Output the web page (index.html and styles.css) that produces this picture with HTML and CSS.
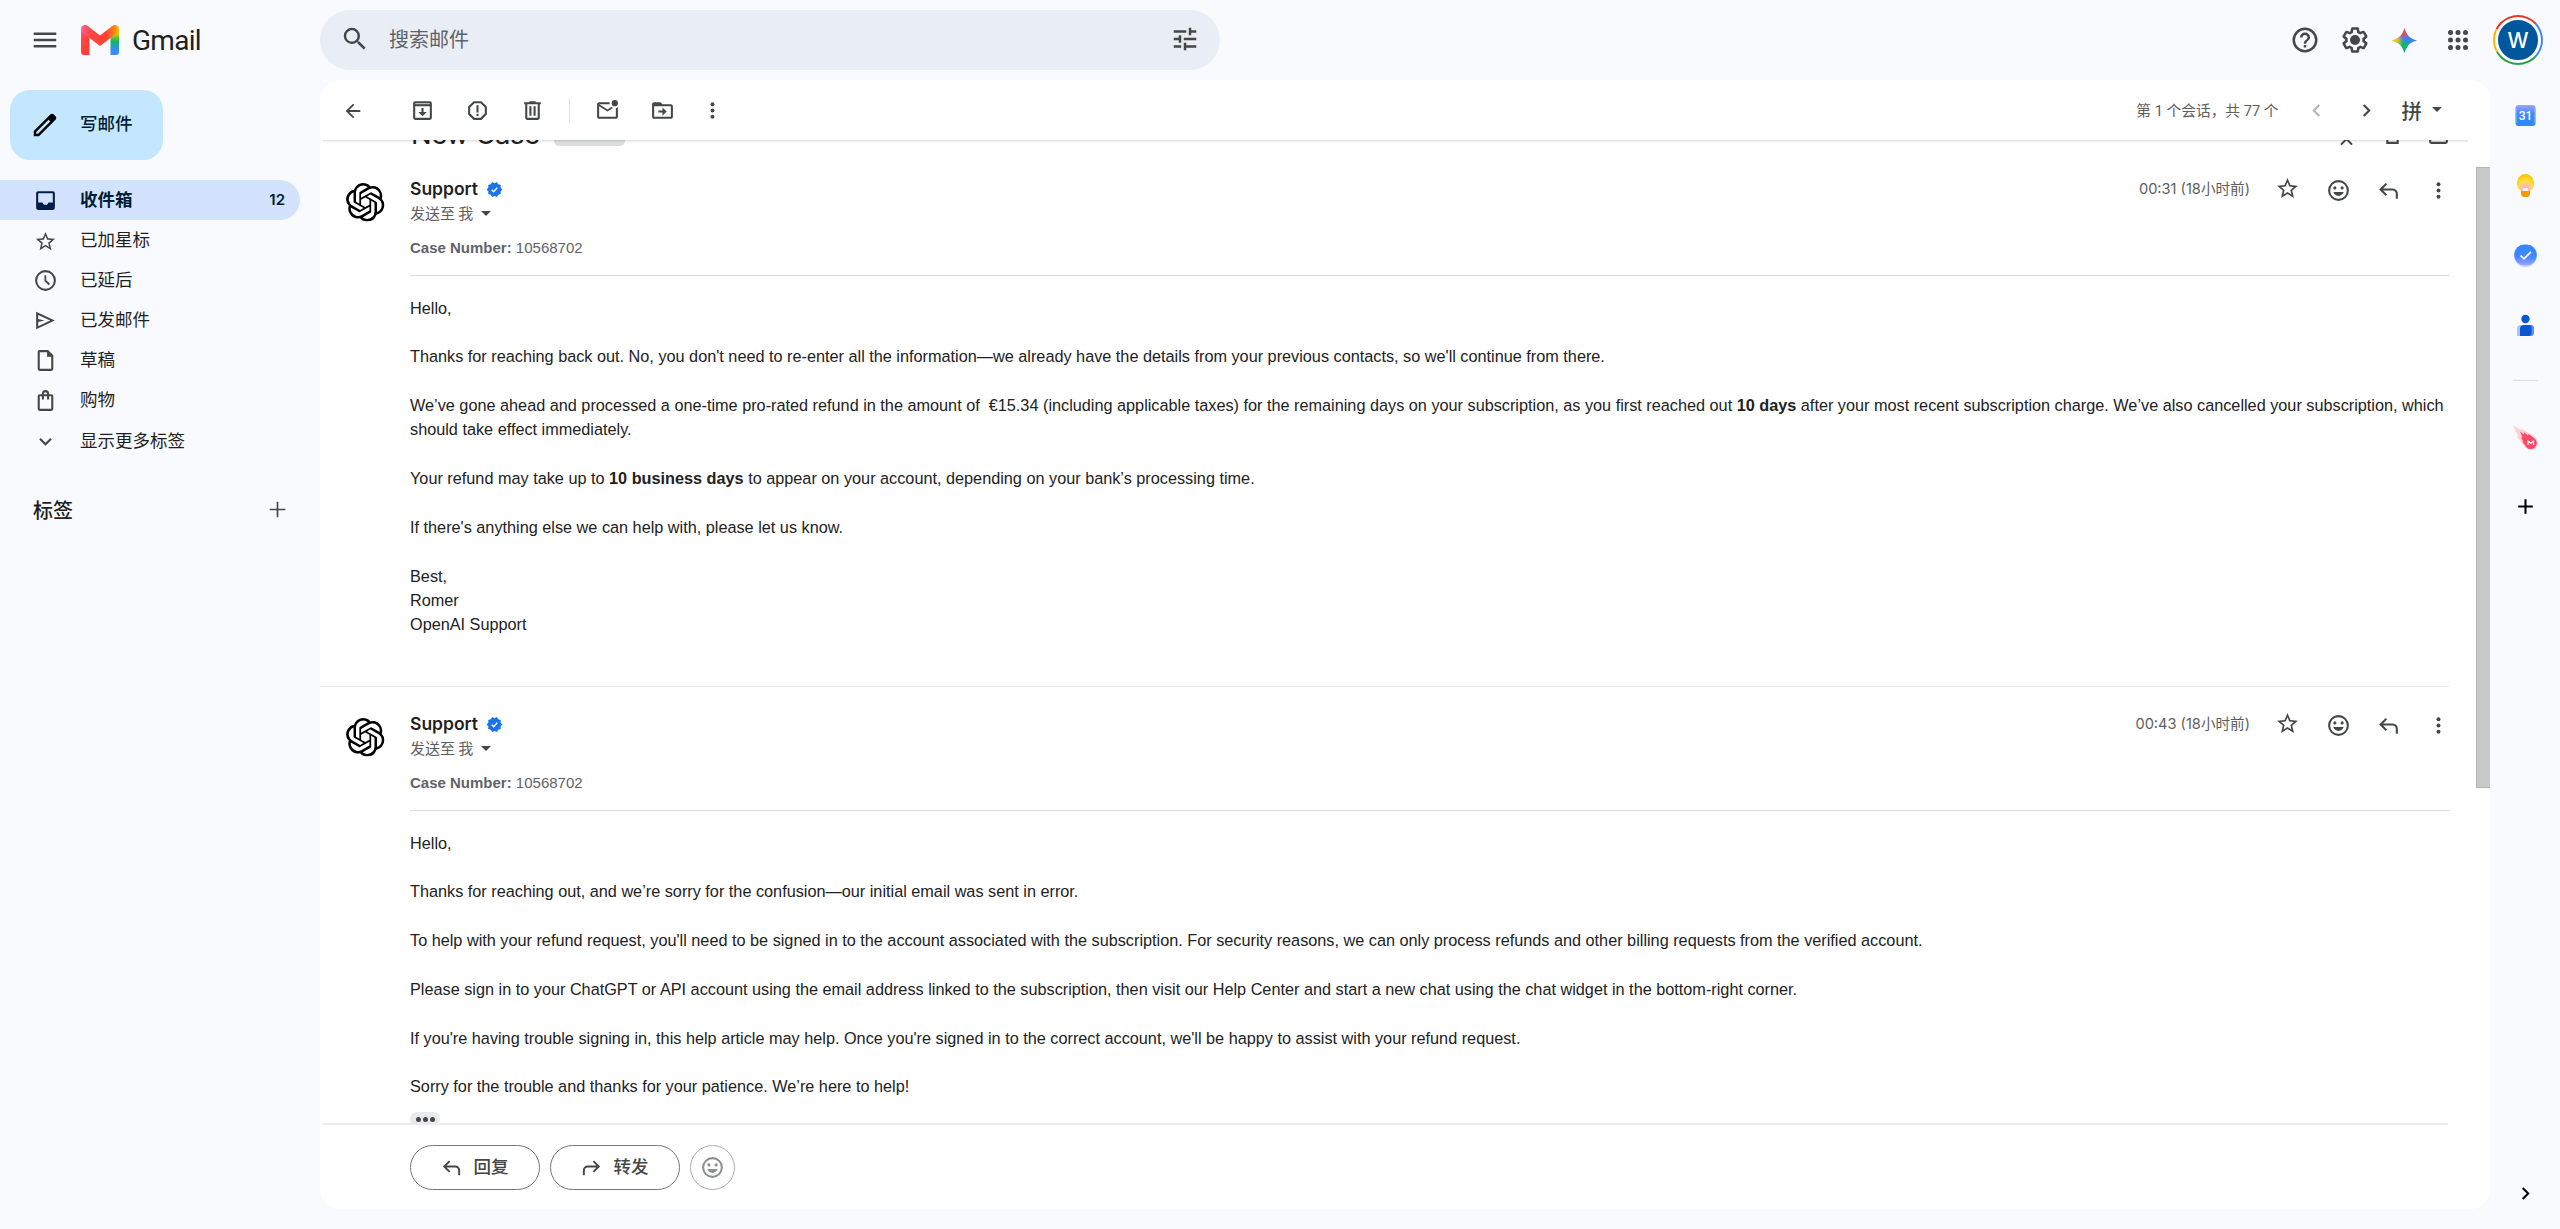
FILE: index.html
```html
<!DOCTYPE html>
<html lang="zh-CN">
<head>
<meta charset="utf-8">
<title>Gmail</title>
<link rel="stylesheet" href="styles.css">
</head>
<body>
<svg class="sprite" aria-hidden="true">
  <defs>
    <linearGradient id="g-left" x1="0" y1="0" x2="0.5" y2="1"><stop offset="0" stop-color="#ff63a0"/><stop offset=".4" stop-color="#ff4641"/><stop offset="1" stop-color="#ff3f35"/></linearGradient>
    <linearGradient id="g-right" x1="0" y1="0" x2="0" y2="1"><stop offset="0" stop-color="#ffc400"/><stop offset=".2" stop-color="#d8c500"/><stop offset=".48" stop-color="#12b95c"/><stop offset=".78" stop-color="#2f8bff"/><stop offset="1" stop-color="#3d88ff"/></linearGradient>
    <linearGradient id="g-mid" x1="0" y1="0" x2="1" y2="0"><stop offset="0" stop-color="#ff63a0"/><stop offset=".25" stop-color="#ff4641"/><stop offset=".65" stop-color="#ff3f35"/><stop offset=".85" stop-color="#ff7a1e"/><stop offset="1" stop-color="#ffc400"/></linearGradient>
    <linearGradient id="g-cal" x1="0" y1="0" x2="0" y2="1"><stop offset="0" stop-color="#a3a1ff"/><stop offset=".4" stop-color="#3b8bff"/><stop offset="1" stop-color="#3186ff"/></linearGradient>
    <linearGradient id="g-task" x1="0" y1="0" x2="0" y2="1"><stop offset="0" stop-color="#3186ff"/><stop offset=".6" stop-color="#4488ff"/><stop offset="1" stop-color="#a9a0ff"/></linearGradient>
    <radialGradient id="g-keep" cx=".5" cy=".85" r=".85"><stop offset="0" stop-color="#ffb0c8"/><stop offset=".3" stop-color="#ffc2a8"/><stop offset=".5" stop-color="#ffe03a"/><stop offset="1" stop-color="#fdc000"/></radialGradient>
    <radialGradient id="s-red" gradientUnits="userSpaceOnUse" cx="11" cy="1" r="10"><stop offset="0" stop-color="#ff4641"/><stop offset=".45" stop-color="#ff4641" stop-opacity=".9"/><stop offset="1" stop-color="#ff4641" stop-opacity="0"/></radialGradient>
    <radialGradient id="s-yel" gradientUnits="userSpaceOnUse" cx="1" cy="12" r="10"><stop offset="0" stop-color="#ffcc00"/><stop offset=".4" stop-color="#f6c311"/><stop offset="1" stop-color="#ffcc00" stop-opacity="0"/></radialGradient>
    <radialGradient id="s-grn" gradientUnits="userSpaceOnUse" cx="9" cy="21" r="11"><stop offset="0" stop-color="#0ebc5f"/><stop offset=".5" stop-color="#0ebc5f"/><stop offset="1" stop-color="#0ebc5f" stop-opacity="0"/></radialGradient>
    <path id="spark-shape" d="M12 0c1.600 6.600 5.400 10.400 12 12-6.600 1.600-10.400 5.400-12 12-1.600-6.600-5.400-10.400-12-12C6.600 10.400 10.400 6.600 12 0z"/>
  </defs>
  <symbol id="i-menu" viewBox="0 0 24 24"><path d="M3 18h18v-2H3v2zm0-5h18v-2H3v2zm0-7v2h18V6H3z"/></symbol>
  <symbol id="i-search" viewBox="0 0 24 24"><path d="M15.5 14h-.79l-.28-.27A6.47 6.47 0 0 0 16 9.5 6.5 6.5 0 1 0 9.5 16c1.61 0 3.09-.59 4.23-1.57l.27.28v.79l5 4.99L20.49 19l-4.99-5zm-6 0C7.01 14 5 11.99 5 9.5S7.01 5 9.5 5 14 7.01 14 9.5 11.99 14 9.5 14z"/></symbol>
  <symbol id="i-tune" viewBox="0 0 24 24"><path d="M3 17v2h6v-2H3zM3 5v2h10V5H3zm10 16v-2h8v-2h-8v-2h-2v6h2zM7 9v2H3v2h4v2h2V9H7zm14 4v-2H11v2h10zm-6-4h2V7h4V5h-4V3h-2v6z"/></symbol>
  <symbol id="i-help" viewBox="0 0 24 24"><path d="M11 18h2v-2h-2v2zm1-16a10 10 0 1 0 0 20 10 10 0 0 0 0-20zm0 18a8 8 0 1 1 0-16 8 8 0 0 1 0 16zm0-14a4 4 0 0 0-4 4h2a2 2 0 1 1 4 0c0 2-3 1.75-3 5h2c0-2.25 3-2.5 3-5a4 4 0 0 0-4-4z"/></symbol>
  <symbol id="i-gear" viewBox="0 0 24 24"><path d="M13.85 22.25h-3.7c-.74 0-1.36-.54-1.45-1.27l-.27-1.89c-.27-.14-.53-.29-.79-.46l-1.8.72c-.7.26-1.47-.03-1.81-.65L2.2 15.53c-.35-.66-.2-1.44.36-1.88l1.53-1.19c-.01-.15-.02-.3-.02-.46 0-.15.01-.31.02-.46l-1.52-1.19c-.59-.45-.74-1.26-.37-1.88l1.85-3.19c.34-.62 1.11-.9 1.79-.63l1.81.73c.26-.17.52-.32.78-.46l.27-1.91c.09-.7.71-1.25 1.44-1.25h3.7c.74 0 1.36.54 1.45 1.27l.27 1.89c.27.14.53.29.79.46l1.8-.72c.71-.26 1.48.03 1.82.65l1.84 3.18c.36.66.2 1.44-.36 1.88l-1.52 1.19c.01.15.02.3.02.46s-.01.31-.02.46l1.52 1.19c.56.45.72 1.23.37 1.86l-1.86 3.22c-.34.62-1.11.9-1.8.63l-1.8-.72c-.26.17-.52.32-.78.46l-.27 1.91c-.1.68-.72 1.22-1.46 1.22zm-3.23-2h2.76l.37-2.55.53-.22c.44-.18.88-.44 1.34-.78l.45-.34 2.38.96 1.38-2.4-2.03-1.58.07-.56c.03-.26.06-.51.06-.78s-.03-.53-.06-.78l-.07-.56 2.03-1.58-1.39-2.4-2.39.96-.45-.35c-.42-.32-.87-.58-1.33-.77l-.52-.22-.37-2.55h-2.76l-.37 2.55-.53.21c-.44.19-.88.44-1.34.79l-.45.33-2.38-.95-1.39 2.39 2.03 1.58-.07.56a7 7 0 0 0-.06.79c0 .26.02.53.06.78l.07.56-2.03 1.58 1.38 2.4 2.39-.96.45.35c.43.33.86.58 1.33.77l.53.22.38 2.55z"/><circle cx="12" cy="12" r="4"/></symbol>
  <symbol id="i-spark" viewBox="0 0 24 24"><use href="#spark-shape" fill="#3186ff"/><use href="#spark-shape" fill="url(#s-grn)"/><use href="#spark-shape" fill="url(#s-yel)"/><use href="#spark-shape" fill="url(#s-red)"/></symbol>
  <symbol id="i-apps" viewBox="0 0 24 24"><circle cx="6" cy="6" r="2"/><circle cx="12" cy="6" r="2"/><circle cx="18" cy="6" r="2"/><circle cx="6" cy="12" r="2"/><circle cx="12" cy="12" r="2"/><circle cx="18" cy="12" r="2"/><circle cx="6" cy="18" r="2"/><circle cx="12" cy="18" r="2"/><circle cx="18" cy="18" r="2"/></symbol>
  <symbol id="i-pencil" viewBox="0 0 24 24"><path d="M20.41 4.94l-1.35-1.35c-.78-.78-2.05-.78-2.83 0L3 16.82V21h4.18L20.41 7.77c.79-.78.79-2.05 0-2.83zm-14 14.12L5 19v-1.36l9.82-9.82 1.41 1.41-9.82 9.83z"/></symbol>
  <symbol id="i-inbox" viewBox="0 0 24 24"><path d="M19 3H5c-1.1 0-2 .9-2 2v14c0 1.1.9 2 2 2h14c1.1 0 2-.9 2-2V5c0-1.1-.9-2-2-2zm0 11h-4l-1.500 2h-3L9 14H5V5h14v9z"/></symbol>
  <symbol id="i-star" viewBox="0 0 24 24"><path d="M22 9.24l-7.19-.62L12 2 9.19 8.63 2 9.24l5.46 4.73L5.82 21 12 17.27 18.18 21l-1.63-7.03L22 9.24zM12 15.4l-3.76 2.27 1-4.28-3.32-2.88 4.38-.38L12 6.1l1.71 4.04 4.38.38-3.32 2.88 1 4.28L12 15.4z"/></symbol>
  <symbol id="i-clock" viewBox="0 0 24 24"><path d="M12 2a10 10 0 1 0 0 20 10 10 0 0 0 0-20zm0 18a8 8 0 1 1 0-16 8 8 0 0 1 0 16zm.7-13H11v5.500l4 4 1.300-1.300-3.600-3.500V7z"/></symbol>
  <symbol id="i-send" viewBox="0 0 24 24"><path d="M3 3.500v17L21 12 3 3.500zm2 13.900V13.500l6-1.500-6-1.500V6.600L16.500 12 5 17.400z"/></symbol>
  <symbol id="i-file" viewBox="0 0 24 24"><path d="M14.500 2H6.500c-1.100 0-2 .9-2 2v16c0 1.100.9 2 2 2h11c1.100 0 2-.9 2-2V7l-5-5zm-8 18V4h7v4.500h4V20h-11z"/></symbol>
  <symbol id="i-bag" viewBox="0 0 24 24"><path d="M17.500 6h-2a3.500 4 0 0 0-7 0h-2c-1.100 0-2 .9-2 2v12c0 1.100.9 2 2 2h11c1.100 0 2-.9 2-2V8c0-1.100-.9-2-2-2zM12 4c1 0 1.700.9 1.700 2h-3.400c0-1.100.7-2 1.700-2zm5.500 16h-11V8h2v3h2V8h3v3h2V8h2v12z"/></symbol>
  <symbol id="i-down" viewBox="0 0 24 24"><path d="M7.41 8.59L12 13.17l4.59-4.58L18 10l-6 6-6-6 1.41-1.41z"/></symbol>
  <symbol id="i-plus" viewBox="0 0 24 24"><path d="M19 13h-6v6h-2v-6H5v-2h6V5h2v6h6v2z"/></symbol>
  <symbol id="i-plus-thin" viewBox="0 0 24 24"><path d="M19.500 12.800h-6.700v6.700h-1.600v-6.700H4.500v-1.600h6.700V4.500h1.600v6.700h6.700z"/></symbol>
  <symbol id="i-back" viewBox="0 0 24 24"><path d="M20 11H7.83l5.590-5.590L12 4l-8 8 8 8 1.410-1.410L7.830 13H20v-2z"/></symbol>
  <symbol id="i-archive" viewBox="0 0 24 24"><path d="M19 3H5a2 2 0 0 0-2 2v14a2 2 0 0 0 2 2h14a2 2 0 0 0 2-2V5a2 2 0 0 0-2-2zm0 16H5V8h14v11z"/><path d="M5 4.800h14v1.200H5z" fill="#b8b9b8"/><path d="M11 9.500v4H8l4 4 4-4h-3v-4z"/></symbol>
  <symbol id="i-spam" viewBox="0 0 24 24"><path d="M15.73 3H8.27L3 8.27v7.46L8.27 21h7.46L21 15.73V8.27L15.73 3zM19 14.9L14.9 19H9.1L5 14.9V9.1L9.1 5h5.8L19 9.1v5.8zM11 7h2v7h-2zM11 15.200h2v2h-2z"/></symbol>
  <symbol id="i-trash" viewBox="0 0 24 24"><path d="M15 4V3H9v1H4v2h1v13c0 1.1.9 2 2 2h10c1.1 0 2-.9 2-2V6h1V4h-5zm2 15H7V6h10v13zM9 8h2v9H9zm4 0h2v9h-2z"/></symbol>
  <symbol id="i-unread" viewBox="0 0 24 24"><path d="M22 8.98V18c0 1.1-.9 2-2 2H4c-1.1 0-2-.9-2-2V6c0-1.1.9-2 2-2h10.1a5 5 0 0 0 0 2H4l8 5 3.67-2.29c.47.43 1.02.76 1.63.98L12 13 4 8v10h16V9.900c.74-.15 1.420-.48 2-.92zM16 5a3 3 0 1 0 6 0 3 3 0 0 0-6 0z"/></symbol>
  <symbol id="i-move" viewBox="0 0 24 24"><path d="M20 6h-8l-2-2H4c-1.1 0-2 .9-2 2v12c0 1.1.9 2 2 2h16c1.1 0 2-.9 2-2V8c0-1.1-.9-2-2-2zm0 12H4V8h16v10zm-8-9l4 4-4 4v-3H8v-2h4z"/></symbol>
  <symbol id="i-dots" viewBox="0 0 24 24"><circle cx="12" cy="6" r="1.900"/><circle cx="12" cy="12" r="1.900"/><circle cx="12" cy="18" r="1.900"/></symbol>
  <symbol id="i-left" viewBox="0 0 24 24"><path d="M15.41 7.41L14 6l-6 6 6 6 1.41-1.41L10.83 12z"/></symbol>
  <symbol id="i-right" viewBox="0 0 24 24"><path d="M8.59 16.59L13.17 12 8.59 7.41 10 6l6 6-6 6z"/></symbol>
  <symbol id="i-caret" viewBox="0 0 10 5"><path d="M0 0l5 5 5-5z"/></symbol>
  <symbol id="i-emoji" viewBox="0 0 24 24"><path d="M12 2a10 10 0 1 0 0 20 10 10 0 0 0 0-20zm0 18a8 8 0 1 1 0-16 8 8 0 0 1 0 16z"/><circle cx="8.500" cy="9.500" r="1.500"/><circle cx="15.500" cy="9.500" r="1.500"/><path d="M7 13.500h10c-.8 2.300-2.700 3.700-5 3.700s-4.200-1.400-5-3.700z"/></symbol>
  <symbol id="i-reply" viewBox="0 0 24 24"><path d="M19 20v-5c0-1.700-1.300-3-3-3H6.800l3.900 3.900L9.300 17.300 3 11l6.300-6.300 1.400 1.400L6.800 10H16a5 5 0 0 1 5 5v5z"/></symbol>
  <symbol id="i-forward" viewBox="0 0 24 24"><path d="M5 20v-5c0-1.700 1.300-3 3-3h9.200l-3.900 3.900 1.400 1.400L21 11l-6.300-6.300-1.400 1.400 3.900 3.900H8a5 5 0 0 0-5 5v5z"/></symbol>
  <symbol id="i-fold" viewBox="0 0 24 24"><path d="M12 15l-6 6 1.400 1.400L12 17.800l4.600 4.600L18 21zM12 9l6-6-1.400-1.400L12 6.200 7.400 1.600 6 3z"/></symbol>
  <symbol id="i-print" viewBox="0 0 24 24"><path d="M19 8h-1V3H6v5H5a3 3 0 0 0-3 3v6h4v4h12v-4h4v-6a3 3 0 0 0-3-3zM8 5h8v3H8V5zm8 14H8v-4h8v4zm4-4h-2v-2H6v2H4v-4c0-.55.45-1 1-1h14c.55 0 1 .45 1 1v4z"/></symbol>
  <symbol id="i-popout" viewBox="0 0 24 24"><path d="M19 19H5V5h7V3H5a2 2 0 0 0-2 2v14a2 2 0 0 0 2 2h14a2 2 0 0 0 2-2v-7h-2v7zM14 3v2h3.590l-9.830 9.830 1.410 1.410L19 6.410V10h2V3h-7z"/></symbol>
  <symbol id="i-verified" viewBox="0 0 24 24"><path fill="#1a73e8" d="M23 12l-2.440-2.780.34-3.680-3.610-.82-1.890-3.180L12 3 8.600 1.540 6.710 4.720l-3.610.81.34 3.680L1 12l2.440 2.780-.34 3.690 3.610.82 1.890 3.180L12 21l3.400 1.460 1.890-3.180 3.610-.82-.34-3.680z"/><path d="M8 12.200l2.800 2.800 5-5.400" fill="none" stroke="#fff" stroke-width="2"/></symbol>
  <symbol id="i-openai" viewBox="0 0 24 24"><path d="M22.2819 9.8211a5.9847 5.9847 0 0 0-.5157-4.9108 6.0462 6.0462 0 0 0-6.5098-2.9A6.0651 6.0651 0 0 0 4.9807 4.1818a5.9847 5.9847 0 0 0-3.9977 2.9 6.0462 6.0462 0 0 0 .7427 7.0966 5.98 5.98 0 0 0 .511 4.9107 6.051 6.051 0 0 0 6.5146 2.9001A5.9847 5.9847 0 0 0 13.2599 24a6.0557 6.0557 0 0 0 5.7718-4.2058 5.9894 5.9894 0 0 0 3.9977-2.9001 6.0557 6.0557 0 0 0-.7475-7.0729zm-9.022 12.6081a4.4755 4.4755 0 0 1-2.8764-1.0408l.1419-.0804 4.7783-2.7582a.7948.7948 0 0 0 .3927-.6813v-6.7369l2.02 1.1686a.071.071 0 0 1 .038.052v5.5826a4.504 4.504 0 0 1-4.4945 4.4944zm-9.6607-4.1254a4.4708 4.4708 0 0 1-.5346-3.0137l.142.0852 4.783 2.7582a.7712.7712 0 0 0 .7806 0l5.8428-3.3685v2.3324a.0804.0804 0 0 1-.0332.0615L9.74 19.9502a4.4992 4.4992 0 0 1-6.1408-1.6464zM2.3408 7.8956a4.485 4.485 0 0 1 2.3655-1.9728V11.6a.7664.7664 0 0 0 .3879.6765l5.8144 3.3543-2.0201 1.1685a.0757.0757 0 0 1-.071 0l-4.8303-2.7865A4.504 4.504 0 0 1 2.3408 7.872zm16.5963 3.8558L13.1038 8.364 15.1192 7.2a.0757.0757 0 0 1 .071 0l4.8303 2.7913a4.4944 4.4944 0 0 1-.6765 8.1042v-5.6772a.79.79 0 0 0-.407-.667zm2.0107-3.0231l-.142-.0852-4.7735-2.7818a.7759.7759 0 0 0-.7854 0L9.409 9.2297V6.8974a.0662.0662 0 0 1 .0284-.0615l4.8303-2.7866a4.4992 4.4992 0 0 1 6.6802 4.66zM8.3065 12.863l-2.02-1.1638a.0804.0804 0 0 1-.038-.0567V6.0742a4.4992 4.4992 0 0 1 7.3757-3.4537l-.142.0805L8.704 5.459a.7948.7948 0 0 0-.3927.6813zm1.0976-2.3654l2.602-1.4998 2.6069 1.4998v2.9994l-2.5974 1.4997-2.6067-1.4997Z"/></symbol>
</svg>

<header class="topbar">
  <div class="brand">
    <svg class="icon menu"><use href="#i-menu"/></svg>
    <svg class="logo" viewBox="0 0 38 30">
      <path fill="url(#g-right)" d="M29.500 8L38 3.500V27a3 3 0 0 1-3 3h-5.500z"/>
      <path fill="url(#g-left)" d="M0 3.500L8.500 8v22H3a3 3 0 0 1-3-3z"/>
      <path fill="url(#g-mid)" d="M0 4C0 .5 3.800-1.300 6.700 1L19 10.500 31.300 1C34.200-1.300 38 .5 38 4c0 1.700-.8 2.900-2 3.900L19 21 2 7.900C.8 6.900 0 5.700 0 4z"/>
    </svg>
    <span class="wordmark">Gmail</span>
  </div>
  <div class="search">
    <svg class="icon i30"><use href="#i-search"/></svg>
    <span class="search-text">搜索邮件</span>
    <svg class="icon i30"><use href="#i-tune"/></svg>
  </div>
  <div class="account">
    <svg class="icon i30"><use href="#i-help"/></svg>
    <svg class="icon i30"><use href="#i-gear"/></svg>
    <svg class="icon spark"><use href="#i-spark"/></svg>
    <svg class="icon i30 apps"><use href="#i-apps"/></svg>
    <div class="avatar"><span>W</span></div>
  </div>
</header>

<div class="workspace">
  <nav class="sidebar">
    <button class="compose"><svg class="icon i30"><use href="#i-pencil"/></svg><span>写邮件</span></button>
    <a class="nav active"><svg class="icon"><use href="#i-inbox"/></svg><span>收件箱</span><b>12</b></a>
    <a class="nav"><svg class="icon nav-star"><use href="#i-star"/></svg><span>已加星标</span></a>
    <a class="nav"><svg class="icon"><use href="#i-clock"/></svg><span>已延后</span></a>
    <a class="nav"><svg class="icon"><use href="#i-send"/></svg><span>已发邮件</span></a>
    <a class="nav"><svg class="icon"><use href="#i-file"/></svg><span>草稿</span></a>
    <a class="nav"><svg class="icon"><use href="#i-bag"/></svg><span>购物</span></a>
    <a class="nav more"><svg class="icon"><use href="#i-down"/></svg><span>显示更多标签</span></a>
    <div class="labels"><span>标签</span><svg class="icon"><use href="#i-plus-thin"/></svg></div>
  </nav>

  <main class="panel">
    <div class="toolbar">
      <svg class="icon back"><use href="#i-back"/></svg>
      <svg class="icon"><use href="#i-archive"/></svg>
      <svg class="icon"><use href="#i-spam"/></svg>
      <svg class="icon"><use href="#i-trash"/></svg>
      <i class="divider"></i>
      <svg class="icon"><use href="#i-unread"/></svg>
      <svg class="icon"><use href="#i-move"/></svg>
      <svg class="icon overflow"><use href="#i-dots"/></svg>
      <div class="pager">
        <span class="count">第 1 个会话，共 77 个</span>
        <svg class="icon faded"><use href="#i-left"/></svg>
        <svg class="icon"><use href="#i-right"/></svg>
        <span class="ime">拼</span>
        <svg class="caret"><use href="#i-caret"/></svg>
      </div>
    </div>

    <div class="thread">
      <div class="scroll">
        <div class="subject">
          <h1>New Case</h1><span class="chip">收件箱</span>
          <div class="subject-tools">
            <svg class="icon"><use href="#i-fold"/></svg>
            <svg class="icon"><use href="#i-print"/></svg>
            <svg class="icon"><use href="#i-popout"/></svg>
          </div>
        </div>

        <article class="message">
          <div class="sender-pic"><svg><use href="#i-openai"/></svg></div>
          <div class="content">
            <div class="meta">
              <div>
                <div class="from">Support<svg><use href="#i-verified"/></svg></div>
                <div class="to">发送至 我<svg class="caret"><use href="#i-caret"/></svg></div>
              </div>
              <div class="tools">
                <span class="time">00:31 (18小时前)</span>
                <svg class="icon star"><use href="#i-star"/></svg>
                <svg class="icon"><use href="#i-emoji"/></svg>
                <svg class="icon"><use href="#i-reply"/></svg>
                <svg class="icon"><use href="#i-dots"/></svg>
              </div>
            </div>
            <div class="case"><b>Case Number:</b> 10568702</div>
            <div class="text">
              <p>Hello,</p>
              <p>Thanks for reaching back out. No, you don't need to re-enter all the information—we already have the details from your previous contacts, so we'll continue from there.</p>
              <p>We’ve gone ahead and processed a one-time pro-rated refund in the amount of &nbsp;€15.34 (including applicable taxes) for the remaining days on your subscription, as you first reached out <b>10 days</b> after your most recent subscription charge. We’ve also cancelled your subscription, which should take effect immediately.</p>
              <p>Your refund may take up to <b>10 business days</b> to appear on your account, depending on your bank’s processing time.</p>
              <p>If there's anything else we can help with, please let us know.</p>
              <p>Best,<br>Romer<br>OpenAI Support</p>
            </div>
          </div>
        </article>

        <article class="message">
          <div class="sender-pic"><svg><use href="#i-openai"/></svg></div>
          <div class="content">
            <div class="meta">
              <div>
                <div class="from">Support<svg><use href="#i-verified"/></svg></div>
                <div class="to">发送至 我<svg class="caret"><use href="#i-caret"/></svg></div>
              </div>
              <div class="tools">
                <span class="time">00:43 (18小时前)</span>
                <svg class="icon star"><use href="#i-star"/></svg>
                <svg class="icon"><use href="#i-emoji"/></svg>
                <svg class="icon"><use href="#i-reply"/></svg>
                <svg class="icon"><use href="#i-dots"/></svg>
              </div>
            </div>
            <div class="case"><b>Case Number:</b> 10568702</div>
            <div class="text">
              <p>Hello,</p>
              <p>Thanks for reaching out, and we’re sorry for the confusion—our initial email was sent in error.</p>
              <p>To help with your refund request, you'll need to be signed in to the account associated with the subscription. For security reasons, we can only process refunds and other billing requests from the verified account.</p>
              <p>Please sign in to your ChatGPT or API account using the email address linked to the subscription, then visit our Help Center and start a new chat using the chat widget in the bottom-right corner.</p>
              <p>If you're having trouble signing in, this help article may help. Once you're signed in to the correct account, we'll be happy to assist with your refund request.</p>
              <p>Sorry for the trouble and thanks for your patience. We’re here to help!</p>
            </div>
            <div class="trimmed"><i></i><i></i><i></i></div>
          </div>
        </article>
      </div>
      <div class="scrollbar"></div>
    </div>

    <footer class="actions">
      <button class="pill"><svg class="icon"><use href="#i-reply"/></svg><span>回复</span></button>
      <button class="pill"><svg class="icon"><use href="#i-forward"/></svg><span>转发</span></button>
      <button class="pill round"><svg class="icon"><use href="#i-emoji"/></svg></button>
    </footer>
  </main>

  <aside class="apps-rail">
    <svg viewBox="0 0 25 25"><rect x="2.500" y="2" width="20" height="21" rx="3" fill="url(#g-cal)"/><path d="M3 5v15M22 5v15" stroke="#8ec2ff" stroke-width="1"/><text x="12.500" y="17" class="cal-text">31</text></svg>
    <svg viewBox="0 0 25 25"><path fill="#f59b00" d="M8 17h9v3.500a3.500 3.500 0 0 1-3.500 3.500h-2A3.500 3.500 0 0 1 8 20.500z"/><path fill="url(#g-keep)" d="M12.500 1a9.300 9.300 0 0 1 4.500 17H8A9.300 9.300 0 0 1 12.500 1z"/><rect x="10" y="15" width="5" height="3" rx="1" fill="#fff"/></svg>
    <svg viewBox="0 0 25 25"><circle cx="12.500" cy="13" r="11.300" fill="#c3e2ff"/><rect x="1.200" y="1.500" width="22.600" height="21" rx="10" fill="url(#g-task)"/><path d="M7.500 12.500l3.500 3.300 7-7" fill="none" stroke="#fff" stroke-width="1.700"/></svg>
    <svg viewBox="0 0 25 25"><circle cx="12.500" cy="6" r="4.200" fill="#0957d0"/><path fill="#a9c3ff" d="M9 12H8a4 4 0 0 0-4 4v7h6z"/><path fill="#5a8dff" d="M15 12h3a3 3 0 0 1 3 3v5a3 3 0 0 1-3 3h-3z"/><path fill="#0957d0" d="M11 12h5a2.500 2.500 0 0 1 2.500 2.500V20a3 3 0 0 1-3 3H7v-7a4 4 0 0 1 4-4z"/></svg>
    <i class="rail-line"></i>
    <svg viewBox="0 0 25 25"><path fill="#ffd0d6" d="M0 0l8 5 1-1 12 7c5 4 5 10 1 12.500-4 2.500-8 1-11-2.500L4 12l1-1z"/><path fill="#ff4867" d="M7 6.500l4 3V7.500l4 3 .5-1.500 5 3.800A6 6 0 1 1 12 20l-2.500-3 .5-1-2-3.500h1.500z"/><path d="M15 20v-4l2.700 2.200 2.700-2.200v4" fill="none" stroke="#fff" stroke-width="1.100"/></svg>
    <svg class="icon rail-plus"><use href="#i-plus"/></svg>
    <svg class="icon rail-toggle"><use href="#i-right"/></svg>
  </aside>
</div>
</body>
</html>
```
FILE: styles.css
```css
* { box-sizing: border-box; }
body {
  margin: 0;
  width: 2560px;
  height: 1229px;
  overflow: hidden;
  background: #f8fafd;
  color: #1f1f1f;
  font-family: "Noto Sans", "Noto Sans CJK SC", sans-serif;
  font-size: 17.5px;
}
button { font: inherit; color: inherit; border: 0; padding: 0; }
.sprite { position: absolute; width: 0; height: 0; }
.icon { width: 25px; height: 25px; fill: #444746; flex: none; display: block; }
.i30 { width: 30px; height: 30px; }

/* top bar */
.topbar { display: flex; height: 80px; }
.brand { width: 320px; display: flex; align-items: center; padding-left: 30px; }
.menu { width: 30px; height: 30px; }
.logo { width: 38px; height: 30px; margin-left: 21px; }
.wordmark { font-family: Roboto, sans-serif; font-size: 28px; letter-spacing: -.7px; margin: 2px 0 0 13px; line-height: 36px; }
.search {
  width: 900px; height: 60px; margin-top: 10px; padding: 0 20px;
  border-radius: 30px; background: #e9eef6;
  display: flex; align-items: center;
}
.search .icon { margin-top: -2px; }
.search-text { flex: 1; margin: -2px 0 0 19px; font-size: 20px; line-height: 28px; color: #5f6368; font-family: "Noto Sans CJK SC", sans-serif; }
.account { margin-left: auto; display: flex; align-items: center; gap: 20px; padding-right: 17px; }
.spark { width: 25px; height: 25px; margin: 0 3px 0 2px; }
.apps { margin-left: 3px; }
.avatar {
  width: 50px; height: 50px; border-radius: 50%; padding: 2px;
  background: conic-gradient(#ea3323 0 46deg, #4285f4 46deg 136deg, #26a244 136deg 240deg, #fbb304 240deg 298deg, #ea3323 298deg);
}
.avatar span {
  display: flex; align-items: center; justify-content: center;
  width: 46px; height: 46px; border-radius: 50%; border: 3px solid #fff;
  background: #00579b; color: #fff; font: 500 21px/1 Inter, sans-serif;
}

.workspace { display: flex; height: 1149px; }

/* sidebar */
.sidebar { width: 320px; padding-top: 10px; font-family: Roboto, "Noto Sans CJK SC", sans-serif; }
.compose {
  display: flex; align-items: center; gap: 20px;
  width: 153px; height: 70px; margin: 0 0 20px 10px; padding-left: 20px;
  border-radius: 20px; background: #c2e7ff; color: #001d35; font-weight: 500;
}
.compose span { line-height: 24px; margin-top: -3px; }
.compose .icon { fill: #000; }
.nav { display: flex; align-items: center; gap: 22px; width: 300px; height: 40px; padding: 0 15px 0 33px; }
.nav span { flex: 1; line-height: 24px; margin-top: -1px; }
.nav b { font: 600 15px/20px Inter, sans-serif; }
.nav.active { background: #d3e3fd; border-radius: 0 20px 20px 0; color: #001d35; font-weight: 700; }
.nav.active .icon { fill: #041e49; }
.nav .nav-star { width: 23px; height: 23px; margin: 3px 1px 0; }
.more { height: 43px; }
.labels { display: flex; align-items: center; justify-content: space-between; height: 56px; margin-top: 18px; padding: 0 30px 0 33px; font-size: 20px; font-weight: 500; width: 320px; }

/* conversation panel */
.panel { width: 2170px; height: 1129px; border-radius: 20px; background: #fff; display: flex; flex-direction: column; overflow: hidden; }
.toolbar { display: flex; align-items: center; height: 60px; padding: 1px 48px 0 22px; gap: 30px; flex: none; }
.back { width: 22px; height: 22px; margin-right: 16px; }
.divider { width: 1px; height: 25px; background: #e0e0e0; margin: 0 -5px 0 -6px; }
.toolbar .overflow { margin-left: -5px; }
.pager { margin-left: auto; display: flex; align-items: center; color: #5e5e5e; }
.count { font: 14.700px/20px Roboto, "Noto Sans CJK SC", sans-serif; margin-right: 25px; }
.faded { opacity: .4; }
.pager .icon + .icon { margin-left: 25px; }
.ime { font: 500 20.500px/24px "Noto Sans CJK SC", sans-serif; color: #444746; margin: -2px 10px 0 23px; }
.caret { width: 10px; height: 5px; fill: #444746; }
.pager .caret { margin-top: -3px; }

.thread { display: flex; height: 983px; flex: none; position: relative; }
.thread::before, .thread::after { content: ""; position: absolute; left: 3px; right: 22px; height: 3px; background: linear-gradient(rgba(0, 0, 0, .12), rgba(0, 0, 0, 0)); top: 0; z-index: 1; }
.thread::after { top: auto; bottom: -2px; right: 42px; height: 2px; background: #ececec; }
.scroll { flex: 1; height: 983px; overflow: hidden; }
.scrollbar { width: 14px; height: 621px; margin-top: 27px; background: #c9c9c9; border: 1px solid #b3b3b3; border-right: 0; }
.subject { display: flex; align-items: center; height: 42px; margin-top: -30px; padding: 6px 25px 0 91px; }
.subject h1 { margin: 0; font: 400 27.500px/36px Inter, sans-serif; letter-spacing: -.5px; }
.chip { margin-left: 14px; height: 24px; width: 71px; border-radius: 5px; background: #dddfde; font: 15px/20px "Noto Sans CJK SC", sans-serif; text-align: center; color: #666; }
.subject-tools { margin-left: auto; display: flex; gap: 21px; }

.message { display: flex; height: 535px; padding-top: 25px; margin-right: 26px; border-bottom: 1px solid #eceeed; }
.sender-pic { width: 90px; padding: 6px 0 0 26px; }
.sender-pic svg { width: 38.500px; height: 38.500px; }
.content { flex: 1; }
.meta { display: flex; justify-content: space-between; height: 50px; }
.from { display: flex; align-items: center; gap: 8px; height: 24px; font: 600 17.500px/24px Inter, sans-serif; }
.from svg { width: 17px; height: 17px; }
.to { display: flex; align-items: center; gap: 8px; height: 24px; font: 15px/24px "Noto Sans CJK SC", sans-serif; color: #5e5e5e; }
.tools { display: flex; align-items: center; height: 26px; gap: 25px; margin-right: -1px; }
.time { font: 14.600px/24px Inter, "Noto Sans CJK SC", sans-serif; color: #5e5e5e; margin-top: -3px; }
.tools .star { margin: -4px 1px 0 0; }
.case { height: 49px; border-bottom: 1px solid #dadce0; font: 15px/42px "Liberation Sans", Arial, sans-serif; color: #5f6368; }
.text { padding-top: 19.500px; font: 16.250px/24.375px "Liberation Sans", Arial, sans-serif; color: #222; }
.text p { margin: 0 0 24.375px; }
.trimmed { display: flex; align-items: center; justify-content: center; gap: 2px; width: 30px; height: 14px; border-radius: 7px; background: #e8eaed; margin-top: -11px; }
.trimmed i { width: 5px; height: 5px; border-radius: 50%; background: #444746; }

.actions { display: flex; gap: 10px; padding: 22px 0 0 90px; }
.pill {
  display: flex; align-items: center; justify-content: center; gap: 11px;
  width: 130px; height: 45px; padding-right: 2px; border: 1px solid #747775; border-radius: 23px; background: #fff;
  font: 500 17.500px/24px "Noto Sans CJK SC", sans-serif; color: #444746;
}
.pill span { margin-top: -3px; }
.pill .icon { width: 23px; height: 23px; }
.round { width: 45px; padding: 0; opacity: .6; }
.round .icon { width: 25px; height: 25px; }

/* right rail */
.apps-rail { width: 70px; padding-top: 23px; display: flex; flex-direction: column; align-items: center; }
.apps-rail > svg { width: 25px; height: 25px; margin-bottom: 45px; flex: none; }
.cal-text { font: 500 12px Roboto, sans-serif; fill: #fff; text-anchor: middle; }
.rail-line { width: 25px; height: 1px; background: #dadce0; margin-bottom: 44px; margin-top: -3px; flex: none; }
.apps-rail > .rail-plus { fill: #000; margin-top: -1px; }
.apps-rail > .rail-toggle { fill: #000; margin: auto 0 23px; }
```
